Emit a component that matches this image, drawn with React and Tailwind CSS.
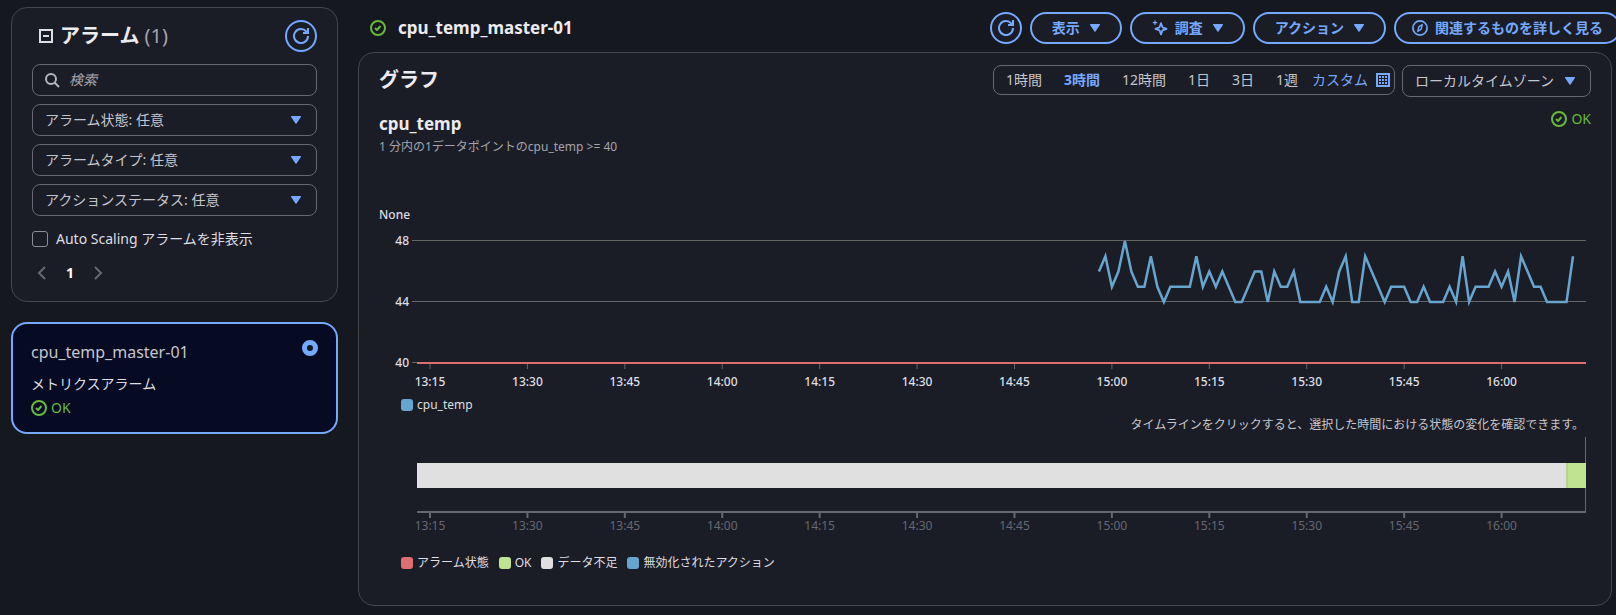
import { useState } from "react";

const FILTERS = ["アラーム状態: 任意", "アラームタイプ: 任意", "アクションステータス: 任意"];
const RANGES = ["1時間", "3時間", "12時間", "1日", "3日", "1週"];

// Chart window: 13:13 - 16:13, one datapoint per minute
const WINDOW_MINUTES = 180;
const FIRST_TICK = 2;
const FIRST_POINT = 105;
const OK_SINCE = 177;

const TICKS = [
    "13:15", "13:30", "13:45", "14:00", "14:15", "14:30",
    "14:45", "15:00", "15:15", "15:30", "15:45", "16:00"
];

const CPU_TEMP = [
    46, 47, 45, 46, 48, 46, 45, 45, 47, 45, 44, 45, 45, 45, 45, 47, 45, 46, 45, 46,
    45, 44, 44, 45, 46, 46, 44, 46, 45, 45, 46, 44, 44, 44, 44, 45, 44, 46, 47, 44,
    44, 47, 46, 45, 44, 45, 45, 45, 44, 44, 45, 44, 44, 44, 45, 44, 47, 44, 45, 45,
    45, 46, 45, 46, 44, 47, 46, 45, 45, 44, 44, 44, 44, 47
];

const STATES = [
    { label: "アラーム状態", swatch: "bg-[#dd6f73]" },
    { label: "OK", swatch: "bg-[#bfe391]" },
    { label: "データ不足", swatch: "bg-[#e0e0e0]" },
    { label: "無効化されたアクション", swatch: "bg-[#67a5cf]" }
];

const percent = (minute) => `${(minute / WINDOW_MINUTES) * 100}%`;

function Caret() {
    return (
        <svg width="10" height="8" viewBox="0 0 10 8" className="shrink-0 fill-[#75a8ff]" aria-hidden="true">
            <path d="M0.6 0h8.8c.5 0 .8.5.5.9L5.5 7.6c-.2.4-.8.4-1 0L.1.9C-.2.5.1 0 .6 0z" />
        </svg>
    );
}

function RefreshIcon() {
    return (
        <svg width="16" height="16" viewBox="0 0 16 16" fill="none" stroke="currentColor" strokeWidth="2" aria-hidden="true">
            <path d="M15 8a7 7 0 1 1-1.6-4.4L15 5" />
            <path d="M10 5h5V0" />
        </svg>
    );
}

function OkIcon() {
    return (
        <svg width="16" height="16" viewBox="0 0 16 16" fill="none" stroke="#67b83c" strokeWidth="2" className="shrink-0" aria-hidden="true">
            <circle cx="8" cy="8" r="7" />
            <path d="M5 8l2 2 3.5-4" strokeLinejoin="round" />
        </svg>
    );
}

function SparkleIcon() {
    return (
        <svg width="16" height="16" viewBox="0 0 16 16" fill="none" stroke="currentColor" aria-hidden="true">
            <path d="M9 3.2l1.5 4.1 4.1 1.5-4.1 1.5L9 14.4l-1.5-4.1-4.1-1.5 4.1-1.5z" strokeWidth="1.8" strokeLinejoin="round" />
            <path d="M3 .5v4.4M.8 2.7h4.4" strokeWidth="1.2" />
        </svg>
    );
}

function CompassIcon() {
    return (
        <svg width="16" height="16" viewBox="0 0 16 16" fill="none" stroke="currentColor" aria-hidden="true">
            <circle cx="8" cy="8" r="7.1" strokeWidth="1.7" />
            <path d="M10.2 4.6L9.2 9.2 5.8 11.4 6.8 6.8z" strokeWidth="1.4" strokeLinejoin="round" />
        </svg>
    );
}

function CalendarIcon() {
    const dots = [3, 6, 9];
    return (
        <svg width="14" height="14" viewBox="0 0 14 14" aria-hidden="true">
            <rect x="1" y="1" width="12" height="12" fill="none" stroke="#75a8ff" strokeWidth="2" />
            {dots.map((y) => dots.map((x) => (
                <rect key={`${x}-${y}`} x={x} y={y} width="2" height="2" fill="#75a8ff" />
            )))}
        </svg>
    );
}

function RoundButton({ label }) {
    return (
        <button aria-label={label} className="flex h-8 w-8 shrink-0 items-center justify-center rounded-full border-2 border-[#75a8ff] bg-[#1b1d26] text-[#75a8ff]">
            <RefreshIcon />
        </button>
    );
}

function PillButton({ icon, caret, children }) {
    return (
        <button className={`flex h-8 shrink-0 items-center gap-[7px] rounded-full border-2 border-[#75a8ff] bg-[#1b1d26] text-sm font-bold whitespace-nowrap text-[#75a8ff] ${
            caret ? "px-5" : "px-4"
        }`}>
            {icon}
            <span>{children}</span>
            {caret && <span className="pl-[3px]"><Caret /></span>}
        </button>
    );
}

function SelectBox({ label }) {
    return (
        <div className="relative">
            <select aria-label={label} className="block h-8 w-full appearance-none rounded-lg border border-[#656871] bg-[#1b1d26] pr-[35px] pl-3 text-sm text-[#c6c6cd]">
                <option>{label}</option>
            </select>
            <span className="pointer-events-none absolute inset-y-0 right-4 flex items-center"><Caret /></span>
        </div>
    );
}

function Sidebar() {
    const [query, setQuery] = useState("");

    return (
        <aside className="flex w-[327px] shrink-0 flex-col gap-5 pt-[7px]">
            <section className="rounded-2xl border border-[#424650] bg-[#1b1d26] px-5 pt-3 pb-4">
                <div className="flex items-center justify-between">
                    <div className="flex items-center gap-[7px] pl-[7px]">
                        <svg width="14" height="14" viewBox="0 0 14 14" fill="none" stroke="#dedee3" strokeWidth="2" aria-hidden="true">
                            <path d="M1 1h12v12H1zM4 7h6" />
                        </svg>
                        <h2 className="text-xl font-bold text-[#ebebf0]">
                            アラーム <span className="font-normal text-[#a4a4ad]">(1)</span>
                        </h2>
                    </div>
                    <RoundButton label="アラームを更新" />
                </div>

                <div className="mt-3 flex flex-col gap-2">
                    <label className="flex h-8 items-center gap-[9px] rounded-lg border border-[#656871] px-[11px]">
                        <svg width="16" height="16" viewBox="0 0 16 16" fill="none" stroke="#b4b4bb" strokeWidth="2" aria-hidden="true">
                            <circle cx="7" cy="7" r="5" />
                            <path d="M10.5 10.5L15 15" />
                        </svg>
                        <input
                            type="text"
                            aria-label="検索"
                            placeholder="検索"
                            value={query}
                            onChange={(e) => setQuery(e.target.value)}
                            className="min-w-0 flex-1 bg-transparent text-sm text-[#c6c6cd] outline-none placeholder:text-[#a4a4ad] placeholder:italic"
                        />
                    </label>
                    {FILTERS.map((filter) => <SelectBox key={filter} label={filter} />)}
                </div>

                <label className="mt-[13px] flex items-center gap-2 text-sm text-[#dedee3]">
                    <input type="checkbox" className="h-4 w-4 appearance-none rounded-[3px] border border-[#8c8c94]" />
                    Auto Scaling アラームを非表示
                </label>

                <nav className="mt-3 flex h-6 items-center gap-[10px] pl-1 text-sm">
                    <button aria-label="前のページ" className="text-[#656871]">
                        <svg width="12" height="14" viewBox="0 0 12 14" fill="none" stroke="currentColor" strokeWidth="2"><path d="M9 1L3 7l6 6" /></svg>
                    </button>
                    <button className="w-6 font-bold text-white">1</button>
                    <button aria-label="次のページ" className="text-[#656871]">
                        <svg width="12" height="14" viewBox="0 0 12 14" fill="none" stroke="currentColor" strokeWidth="2"><path d="M3 1l6 6-6 6" /></svg>
                    </button>
                </nav>
            </section>

            <label className="flex justify-between rounded-2xl border-2 border-[#75a8ff] bg-[#060a23] px-[18px] pt-4 pb-3 text-[#dedee3]">
                <span className="flex flex-col">
                    <span className="text-base leading-6 text-[#c6c6cd]">cpu_temp_master-01</span>
                    <span className="mt-2 text-sm leading-6">メトリクスアラーム</span>
                    <span className="flex items-center gap-1 text-sm leading-6 text-[#67b83c]"><OkIcon />OK</span>
                </span>
                <input type="radio" name="alarm" defaultChecked className="h-4 w-4 appearance-none rounded-full border-[5px] border-[#75a8ff] bg-[#161820]" />
            </label>
        </aside>
    );
}

function MetricChart() {
    const points = CPU_TEMP.map((v, i) => `${FIRST_POINT + i},${48 - v}`).join(" ");

    return (
        <svg className="block h-[161px] w-full overflow-visible text-xs" role="img" aria-label="cpu_temp">
            {[48, 44, 40].map((v, i) => (
                <g key={v}>
                    <rect x="-5" y={17 + i * 61} width="5" height="1" fill="#656565" />
                    <rect x="0" y={17 + i * 61} width="100%" height="1" fill="#656565" />
                    <text x="-8" y={22 + i * 61} textAnchor="end" fill="#dedee3" className="font-medium">{v}</text>
                </g>
            ))}
            {TICKS.map((tick, i) => (
                <g key={tick}>
                    <line x1={percent(FIRST_TICK + i * 15)} x2={percent(FIRST_TICK + i * 15)} y1="141" y2="146" stroke="#656565" />
                    <text x={percent(FIRST_TICK + i * 15)} y="163" textAnchor="middle" fill="#dedee3" className="font-medium">{tick}</text>
                </g>
            ))}
            <rect x="0" y="139" width="100%" height="2" fill="#dd6f73" />
            <svg x="0" y="18" width="100%" height="122" viewBox="0 0 180 8" preserveAspectRatio="none" overflow="visible">
                <polyline points={points} fill="none" stroke="#67a5cf" strokeWidth="2.5" vectorEffect="non-scaling-stroke" />
            </svg>
        </svg>
    );
}

function StateTimeline() {
    return (
        <svg className="block h-[96px] w-full overflow-visible text-xs" role="img" aria-label="アラーム状態のタイムライン">
            <svg x="100%" overflow="visible">
                <rect x="-1" y="0" width="1" height="75" fill="#656871" />
            </svg>
            <rect x="0" y="26" width="100%" height="25" fill="#e0e0e0" />
            <rect x={percent(OK_SINCE)} y="26" width={percent(WINDOW_MINUTES - OK_SINCE)} height="25" fill="#bfe391" />
            <rect x={percent(OK_SINCE)} y="26" width="1" height="25" fill="#a5c87a" />
            <rect x="0" y="74" width="100%" height="2" fill="#656871" />
            {TICKS.map((tick, i) => (
                <g key={tick}>
                    <line x1={percent(FIRST_TICK + i * 15)} x2={percent(FIRST_TICK + i * 15)} y1="76" y2="81" stroke="#656871" strokeWidth="2" />
                    <text x={percent(FIRST_TICK + i * 15)} y="93" textAnchor="middle" fill="#656871">{tick}</text>
                </g>
            ))}
        </svg>
    );
}

function LegendItem({ label, swatch }) {
    return (
        <li className="flex items-center gap-1">
            <span className={`h-3 w-3 rounded-[3px] ${swatch}`} />
            {label}
        </li>
    );
}

function GraphPanel() {
    const [range, setRange] = useState("3時間");

    return (
        <section className="rounded-2xl border border-[#424650] bg-[#1b1d26] px-5 pt-3 pb-[33px]">
            <div className="flex items-start justify-between">
                <h2 className="text-xl leading-[30px] font-bold text-[#ebebf0]">グラフ</h2>
                <div className="flex gap-[7px]">
                    <div className="flex h-[30px] items-center gap-[22px] rounded-lg border border-[#656871] pr-1 pl-3 text-sm whitespace-nowrap text-[#c6c6cd]">
                        {RANGES.map((r) => (
                            <button
                                key={r}
                                onClick={() => setRange(r)}
                                className={r === range ? "font-bold text-[#75a8ff]" : ""}
                            >
                                {r}
                            </button>
                        ))}
                        <button className="-ml-2 flex items-center gap-2 text-[#75a8ff]">
                            カスタム
                            <CalendarIcon />
                        </button>
                    </div>
                    <SelectBox label="ローカルタイムゾーン" />
                </div>
            </div>

            <div className="mt-3 flex items-start justify-between">
                <div>
                    <h3 className="text-[17px] leading-[30px] font-bold text-[#ebebf0]">cpu_temp</h3>
                    <p className="text-xs leading-4 text-[#a4a4ad]">1 分内の1データポイントのcpu_temp &gt;= 40</p>
                </div>
                <span className="flex items-center gap-1 text-sm text-[#67b83c]"><OkIcon />OK</span>
            </div>

            <p className="mt-[52px] text-xs leading-4 font-medium text-[#dedee3]">None</p>

            <div className="pr-[5px] pl-[38px]">
                <MetricChart />
            </div>
            <ul className="mt-3 flex pl-[22px] text-xs leading-[18px] text-[#dedee3]">
                <LegendItem label="cpu_temp" swatch="bg-[#67a5cf]" />
            </ul>

            <div className="pr-[5px] pl-[38px]">
                <p className="mt-[2px] mb-[3px] pr-[2px] text-right text-xs leading-[18px] text-[#c6c6cd]">
                    タイムラインをクリックすると、選択した時間における状態の変化を確認できます。
                </p>
                <StateTimeline />
            </div>
            <ul className="mt-[21px] flex gap-[10px] pl-[22px] text-xs leading-[18px] text-[#dedee3]">
                {STATES.map((s) => <LegendItem key={s.label} {...s} />)}
            </ul>
        </section>
    );
}

function App() {
    return (
        <div className="flex min-h-screen gap-5 overflow-hidden bg-[#161820] pr-1 pb-[9px] pl-[11px] font-['Noto_Sans','Noto_Sans_CJK_JP',sans-serif]">
            <Sidebar />
            <main className="min-w-0 flex-1">
                {/* The action bar runs past the panel's right edge */}
                <header className="-mr-[9px] flex h-[52px] items-center justify-between pt-1">
                    <h1 className="flex items-center gap-3 pl-3 text-[17px] font-bold text-[#ebebf0]">
                        <OkIcon />
                        cpu_temp_master-01
                    </h1>
                    <div className="flex gap-2">
                        <RoundButton label="更新" />
                        <PillButton caret>表示</PillButton>
                        <PillButton icon={<SparkleIcon />} caret>調査</PillButton>
                        <PillButton caret>アクション</PillButton>
                        <PillButton icon={<CompassIcon />}>関連するものを詳しく見る</PillButton>
                    </div>
                </header>
                <GraphPanel />
            </main>
        </div>
    );
}

export default App;
